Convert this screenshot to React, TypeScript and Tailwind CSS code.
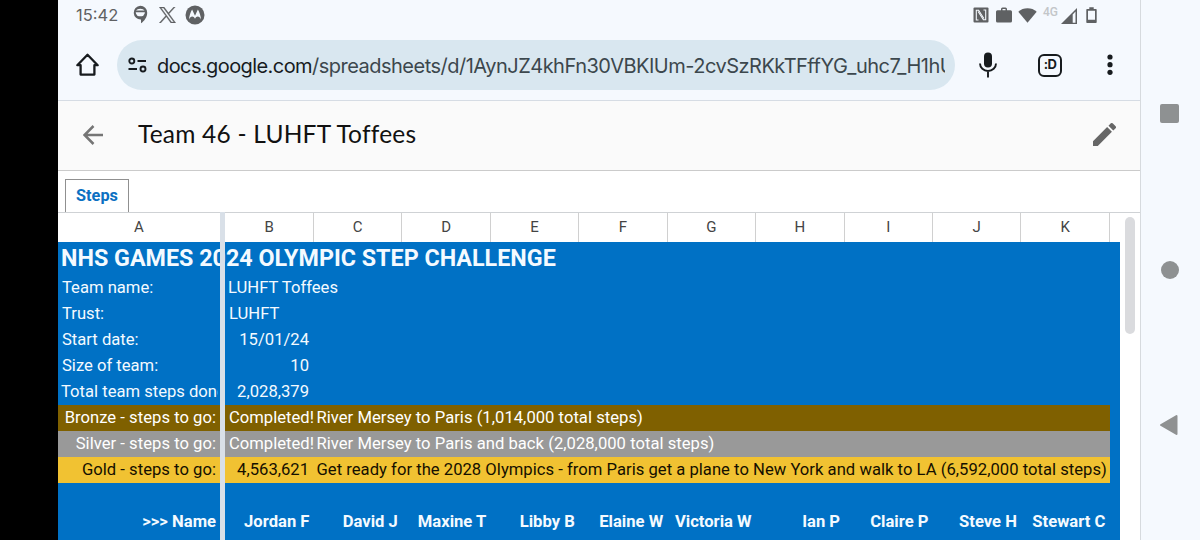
import type { ReactNode } from "react";
import clsx from "clsx";

const columns = ["B", "C", "D", "E", "F", "G", "H", "I", "J", "K"];

const names = ["Jordan F", "David J", "Maxine T", "Libby B", "Elaine W", "Victoria W", "Ian P", "Claire P", "Steve H", "Stewart C"];

const details = [
  { label: "Team name:", value: "LUHFT Toffees", pad: "pl-1", valuePad: "pl-[3px]" },
  { label: "Trust:", value: "LUHFT", pad: "pl-1", valuePad: "pl-[4px]" },
  { label: "Start date:", value: "15/01/24", pad: "pl-1", numeric: true },
  { label: "Size of team:", value: "10", pad: "pl-1", numeric: true },
  { label: "Total team steps done:", value: "2,028,379", pad: "pl-[3px] w-[160px] overflow-hidden", numeric: true },
];

const medals = [
  { label: "Bronze - steps to go:", value: "Completed!", text: "River Mersey to Paris (1,014,000 total steps)", color: "bg-[#7f6000] text-white" },
  { label: "Silver - steps to go:", value: "Completed!", text: "River Mersey to Paris and back (2,028,000 total steps)", color: "bg-[#999999] text-white" },
  { label: "Gold - steps to go:", value: "4,563,621", text: "Get ready for the 2028 Olympics - from Paris get a plane to New York and walk to LA (6,592,000 total steps)", color: "bg-[#f1c232] text-[#151000]" },
];

function StatusBar() {
  return (
    <div className="flex h-[30px] items-center pl-[18px] pr-[43px] text-[#5f6163]">
      <span className="w-[56px] font-[Inter] text-[16.5px]">15:42</span>
      <svg className="h-5 w-[18px]" viewBox="0 0 18 20">
        <path fill="currentColor" d="M8.300.800a6.900 6.900 0 0 1 6.900 6.900c0 4.600-2.900 8.200-6.200 10.600v-3.700A6.900 6.900 0 1 1 8.300.800z" />
        <path d="M4 5.400a4.600 2.600 0 0 1 8.600 0z" fill="#f5f9fe" />
        <path d="M3.700 7.300h9.200a4.600 4 0 0 1-9.200 0z" fill="#f5f9fe" />
      </svg>
      <svg className="ml-[9px] h-4 w-[17px]" viewBox="0 0 24 24" preserveAspectRatio="none" fill="currentColor" stroke="currentColor" strokeWidth=".5">
        <path d="M14.200 10.200 22.900 0h-2.100l-7.500 8.800L7.200 0H.300l9.100 13.300L.300 24h2.100l8-9.300 6.300 9.300h7zM3.100 1.600h3.200l14.600 20.900h-3.200z" />
      </svg>
      <svg className="ml-[9px] h-5 w-5" viewBox="0 0 20 20">
        <circle cx="10" cy="10" r="9.500" fill="currentColor" />
        <path fill="#f5f9fe" d="M4 14.500C4.300 11 5.400 7.200 7.100 4.500L10 10.800l2.900-6.300c1.700 2.700 2.800 6.500 3.100 10-.8-1.700-2-2.900-3.200-2.900-1.200 0-2 .8-2.800 2.200-.8-1.400-1.600-2.200-2.800-2.200-1.200 0-2.400 1.200-3.200 2.900z" />
      </svg>
      <div className="ml-auto flex items-center">
        <svg className="h-4 w-4" viewBox="0 0 16 16">
          <rect x=".5" y=".5" width="15" height="15" rx="1" fill="currentColor" />
          <path d="M5.500 13H3.300V3.300h2.300l5.300 8.200" fill="none" stroke="#f5f9fe" strokeWidth="1.100" />
          <path d="M10.500 3h2.200v9.700h-2.300L5.100 4.500" fill="none" stroke="#f5f9fe" strokeWidth="1.100" />
        </svg>
        <svg className="ml-[6px] h-4 w-[18px]" viewBox="0 0 18 16" fill="currentColor">
          <path fillRule="evenodd" d="M6 3.300V2a1.500 1.500 0 0 1 1.500-1.500h3A1.500 1.500 0 0 1 12 2v1.300h3.500A1.500 1.500 0 0 1 17 4.800v9.200a1.500 1.500 0 0 1-1.500 1.500h-13A1.500 1.500 0 0 1 1 14V4.800a1.500 1.500 0 0 1 1.500-1.500zm1.500 0h3V2h-3z" />
        </svg>
        <svg className="ml-[5px] h-4 w-[19px]" viewBox="0 0 19 16" fill="currentColor">
          <path d="M.300 4.800a14 14 0 0 1 18.400 0L9.500 15.800z" />
        </svg>
        <span className="ml-[6px] -mt-[6px] w-[18px] font-[Roboto] text-[12px] font-medium text-[#c3c6c9]">4G</span>
        <svg className="mt-px h-4 w-4" viewBox="0 0 16 16">
          <path fill="currentColor" fillRule="evenodd" d="M0 16 16 0v16zM11.700 14.700h2.800V3.600l-2.800 2.900z" />
        </svg>
        <svg className="ml-[9px] h-4 w-[11px]" viewBox="0 0 11 16">
          <path fill="currentColor" fillRule="evenodd" d="M3.300.300h4.400V2h2c.6 0 1 .4 1 1v12c0 .6-.4 1-1 1h-8.400c-.6 0-1-.4-1-1V3c0-.6.4-1 1-1h2zM2 3.700v9h7v-9z" />
        </svg>
      </div>
    </div>
  );
}

function AddressBar() {
  return (
    <div className="flex h-[70px] items-center pl-[18px] pr-[20px] text-[#171b1e]">
      <svg className="h-6 w-6" viewBox="0 0 24 24" fill="none" stroke="currentColor" strokeWidth="2.300" strokeLinejoin="round">
        <path d="M1.300 12.200 11.500 1.800l10.200 10.400h-3.300v9.400H4.600v-9.400z" />
      </svg>
      <div className="ml-[17px] flex h-[50px] w-[838px] items-center rounded-full bg-[#d9e7f0] pl-[11px] pr-[10px]">
        <svg className="h-4 w-[19px] shrink-0" viewBox="0 0 19 16" fill="none" stroke="currentColor" strokeWidth="1.900">
          <circle cx="3.800" cy="4" r="2.500" />
          <path d="M9.500 4H18M.500 12H9" />
          <circle cx="15" cy="12" r="2.500" />
        </svg>
        <div className="ml-[10px] mt-px min-w-0 flex-1 overflow-hidden whitespace-nowrap font-[Inter] text-[20px] text-[#3c474d]">
          <span className="tracking-[-0.58px] text-[#171b1e]">docs.google.com</span>
          <span className="tracking-[-0.51px]">/spreadsheets/d/1AynJZ4khFn30VBKIUm-2cvSzRKkTFffYG_uhc7_H1hU</span>
        </div>
      </div>
      <svg className="ml-[23.500px] h-[26px] w-[18px]" viewBox="0 0 18 26">
        <rect x="5" y=".5" width="8" height="15" rx="4" fill="currentColor" />
        <path d="M1 11.500a8 7.500 0 0 0 16 0M9 19v6.500" fill="none" stroke="currentColor" strokeWidth="1.900" />
      </svg>
      <div className="ml-[41.500px] flex h-[23px] w-[24px] items-center justify-center rounded-[6px] border-[2.5px] border-current font-[Inter] text-[13px] font-bold tracking-[-0.6px]">:D</div>
      <svg className="ml-auto h-[22px] w-[20px]" viewBox="0 0 20 22" fill="currentColor">
        <circle cx="10" cy="3" r="2.600" />
        <circle cx="10" cy="10.700" r="2.600" />
        <circle cx="10" cy="18.300" r="2.600" />
      </svg>
    </div>
  );
}

function TitleBar() {
  return (
    <div className="flex h-[71px] items-center border-y border-t-[#d6dce4] border-b-[#cbcbcb] bg-[#fafafa] pb-0.5 pl-[25px] pr-[24px]">
      <svg className="h-5 w-5" viewBox="0 0 20 20" fill="none" stroke="#757575" strokeWidth="2.500">
        <path d="M20 10H1.800M10.500 1 1.500 10l9 9" />
      </svg>
      <h1 className="ml-[35px] font-[Lato] text-[24.5px] tracking-[0.22px] text-[#111]">Team 46 - LUHFT Toffees</h1>
      <svg className="ml-auto h-[23px] w-[23px]" viewBox="3 3 18 18" fill="#666">
        <path d="M3 17.250V21h3.750L17.810 9.940l-3.750-3.750zM20.710 7.040a1 1 0 0 0 0-1.410l-2.340-2.340a1 1 0 0 0-1.410 0l-1.830 1.830 3.750 3.750z" />
      </svg>
    </div>
  );
}

function Row({ first, children, className }: { first: ReactNode; children?: ReactNode; className?: string }) {
  return (
    <div className={clsx("flex h-[26px] items-center whitespace-nowrap pt-px", className)}>
      <div className="w-[162px] shrink-0">{first}</div>
      <div className="ml-[5px] flex min-w-0 flex-1 items-center">{children}</div>
    </div>
  );
}

function Sheet() {
  return (
    <div className="relative h-[328px]">
      <div className="flex h-[30px] border-t border-[#cfd2d5] text-center font-[Roboto] text-[15px] leading-[29px] text-[#444]">
        <div className="w-[167.5px] pr-[5.5px]">A</div>
        {columns.map((c) => (
          <div key={c} className="w-[88.45px] border-r border-[#d0d0d0]">{c}</div>
        ))}
      </div>
      <div className="h-[298px] w-[1062px] overflow-hidden bg-[#0071c5] font-[Roboto] text-[16.63px] text-[#f4faff]">
        <h2 className="h-[33px] whitespace-nowrap pl-[3px] text-[23.3px] font-bold leading-[33px]">
          NHS GAMES 2024 OLYMPIC STEP CHALLENGE
        </h2>
        {details.map((d) => (
          <Row key={d.label} first={<div className={d.pad}>{d.label}</div>}>
            <div className={d.numeric ? "w-[84px] text-right" : d.valuePad}>{d.value}</div>
          </Row>
        ))}
        {medals.map((m) => (
          <Row key={m.label} className={clsx("w-[1052px]", m.color)} first={<div className="pr-1 text-right tracking-[0.03px]">{m.label}</div>}>
            <div className={m.value === "Completed!" ? "w-[91.500px] pl-1" : "w-[91.500px] pr-[7.500px] text-right"}>{m.value}</div>
            <div className="tracking-[0.025px]">{m.text}</div>
          </Row>
        ))}
        <div className="h-[26px]" />
        <Row className="font-bold" first={<div className="pr-1 text-right">&gt;&gt;&gt; Name</div>}>
          {names.map((n) => (
            <div key={n} className="w-[88.45px] shrink-0 pr-1 text-right">{n}</div>
          ))}
        </Row>
      </div>
      {/* frozen column divider */}
      <div className="absolute bottom-0 left-[162px] top-0 w-[5px] bg-[#d9e0e8]" />
      <div className="absolute left-[1067px] top-[5px] h-[117px] w-[10px] rounded-full bg-[#dadbde]" />
    </div>
  );
}

export default function App() {
  return (
    <div className="flex h-[540px] w-[1200px] overflow-hidden bg-black">
      <main className="ml-[58px] w-[1082px] bg-white">
        <div className="bg-[#f5f9fe]">
          <StatusBar />
          <AddressBar />
        </div>
        <TitleBar />
        <div className="flex h-[41px] items-end pl-[7px]">
          <div className="flex h-[33px] w-[64px] items-center justify-center border border-b-0 border-[#909090] pt-px font-[Roboto] text-[16.3px] font-bold text-[#0b70c2]">
            Steps
          </div>
        </div>
        <Sheet />
      </main>
      <nav className="flex w-[60px] flex-col items-center border-l border-[#d6dade] bg-[#f5f9fe] pr-[2px]">
        <div className="mt-[104px] h-[19px] w-[19px] rounded-[2px] bg-[#8e9192]" />
        <div className="mt-[138px] h-[18px] w-[18px] rounded-full bg-[#8e9192]" />
        <svg className="mt-[135px] mr-[2px] h-[22px] w-[19px]" viewBox="0 0 19 22" fill="#8f9192" stroke="#8f9192" strokeWidth="2" strokeLinejoin="round">
          <path d="M2 11 17.500 2v18z" />
        </svg>
      </nav>
    </div>
  );
}
